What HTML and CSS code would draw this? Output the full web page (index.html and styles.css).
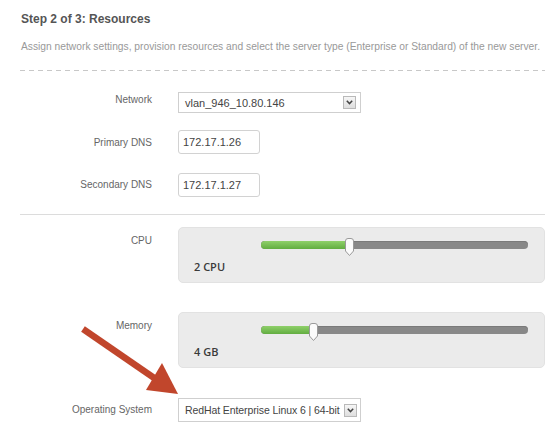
FILE: index.html
```html
<!DOCTYPE html>
<html>
<head>
<meta charset="utf-8">
<link rel="stylesheet" href="styles.css">
</head>
<body>
<div class="wizard">
  <h2 class="title">Step 2 of 3: Resources</h2>
  <p class="desc">Assign network settings, provision resources and select the server type (Enterprise or Standard) of the new server.</p>
  <div class="dashed"></div>

  <div class="row row-network">
    <div class="label">Network</div>
    <div class="select select-network">
      <span class="select-text">vlan_946_10.80.146</span>
      <span class="select-btn"><svg width="7" height="5" viewBox="0 0 7 5"><polyline points="0.8,0.8 3.5,3.6 6.2,0.8" fill="none" stroke="#444" stroke-width="1.5"/></svg></span>
    </div>
  </div>
  <div class="row row-dns1">
    <div class="label">Primary DNS</div>
    <div class="input">172.17.1.26</div>
  </div>
  <div class="row row-dns2">
    <div class="label">Secondary DNS</div>
    <div class="input">172.17.1.27</div>
  </div>

  <div class="solid"></div>

  <div class="row row-slider row-cpu">
    <div class="label label-top">CPU</div>
    <div class="panel">
      <div class="track">
        <div class="fill" style="width:87px"></div>
        <svg class="handle" style="left:83px" width="11" height="19" viewBox="0 0 11 19"><path d="M1.5 3 Q1.5 0.5 4 0.5 H7 Q9.5 0.5 9.5 3 V13 L5.5 17.5 L1.5 13 Z" fill="#fbfbfb" stroke="#9a9a9a" stroke-width="1"/></svg>
      </div>
      <div class="value">2 CPU</div>
    </div>
  </div>

  <div class="row row-slider row-mem">
    <div class="label label-top">Memory</div>
    <div class="panel">
      <div class="track">
        <div class="fill" style="width:50px"></div>
        <svg class="handle" style="left:47px" width="11" height="19" viewBox="0 0 11 19"><path d="M1.5 3 Q1.5 0.5 4 0.5 H7 Q9.5 0.5 9.5 3 V13 L5.5 17.5 L1.5 13 Z" fill="#fbfbfb" stroke="#9a9a9a" stroke-width="1"/></svg>
      </div>
      <div class="value">4 GB</div>
    </div>
  </div>

  <div class="row row-os">
    <div class="label">Operating System</div>
    <div class="select select-os">
      <span class="select-text">RedHat Enterprise Linux 6 | 64-bit</span>
      <span class="select-btn"><svg width="7" height="5" viewBox="0 0 7 5"><polyline points="0.8,0.8 3.5,3.6 6.2,0.8" fill="none" stroke="#444" stroke-width="1.5"/></svg></span>
    </div>
  </div>

  <svg class="pointer" width="200" height="110" viewBox="0 0 200 110">
    <line x1="83" y1="14" x2="160" y2="67" stroke="#c1462c" stroke-width="6.5"/>
    <polygon points="178,79 146,75 162,48" fill="#c1462c"/>
  </svg>
</div>
</body>
</html>
```

FILE: styles.css
```css
html, body {
  margin: 0;
  padding: 0;
  background: #ffffff;
}
body {
  font-family: "Liberation Sans", Arial, sans-serif;
  color: #666;
}
.wizard {
  position: relative;
  padding: 12px 5px 0 20px;
  width: 525px;
}
.title {
  margin: 0;
  font-size: 12px;
  line-height: 14px;
  font-weight: bold;
  color: #555;
  padding-left: 1px;
}
.desc {
  margin: 15px 0 0 0;
  font-size: 10.25px;
  line-height: 12px;
  color: #999;
  padding-left: 1px;
  white-space: nowrap;
}
.dashed {
  margin-top: 17px;
  height: 1px;
  background: repeating-linear-gradient(to right, #c8c8c8 0 5px, transparent 5px 9px);
}
.row {
  display: grid;
  grid-template-columns: 132px auto;
  column-gap: 26px;
  align-items: center;
  justify-items: start;
}
.label {
  justify-self: end;
  font-size: 10px;
  line-height: 12px;
  color: #666;
}
.row-network { margin-top: 21px; }
.row-network .label { margin-bottom: 5px; }
.row-dns1 { margin-top: 17px; }
.row-dns1 .label { margin-top: 2px; }
.row-dns2 { margin-top: 19px; }
.select {
  box-sizing: border-box;
  display: flex;
  align-items: center;
  justify-content: space-between;
  background: #fff;
  border: 1px solid #cfcfcf;
  padding: 0 4px 0 6px;
  font-size: 11px;
  color: #444;
}
.select-text {
  white-space: nowrap;
}
.select-network {
  width: 183px;
  height: 21px;
}
.select-btn {
  flex: none;
  box-sizing: border-box;
  width: 13px;
  height: 13px;
  border: 1px solid #b9b9b9;
  background: linear-gradient(#f6f6f6, #dedede);
  display: flex;
  align-items: center;
  justify-content: center;
}
.input {
  box-sizing: border-box;
  width: 82px;
  height: 24px;
  border: 1px solid #d2d2d2;
  border-radius: 3px;
  font-size: 11px;
  line-height: 22px;
  padding-left: 4px;
  color: #444;
}
.solid {
  margin-top: 17px;
  height: 1px;
  background: #dcdcdc;
}
.row-slider {
  align-items: start;
}
.row-cpu { margin-top: 12px; }
.row-mem { margin-top: 29px; }
.label-top { margin-top: 8px; }
.panel {
  box-sizing: border-box;
  width: 367px;
  height: 56px;
  background: #ebebeb;
  border: 1px solid #e2e2e2;
  border-radius: 5px;
  padding: 13px 0 0 15px;
}
.track {
  position: relative;
  margin-left: 67px;
  width: 267px;
  height: 8px;
  border-radius: 4px;
  background: #888;
  box-shadow: inset 0 1px 0 #7a7a7a;
}
.fill {
  height: 8px;
  border-radius: 4px 0 0 4px;
  background: linear-gradient(#8fd06a, #62ad41);
}
.handle {
  position: absolute;
  top: -3px;
}
.value {
  margin-top: 11px;
  font-family: "Open Sans", "Liberation Sans", sans-serif;
  font-weight: 600;
  font-size: 11px;
  line-height: 14px;
  color: #3a3a3a;
}
.row-os { margin-top: 30px; }
.select-os {
  min-width: 183px;
  height: 24px;
  padding: 0 3px 0 6px;
  gap: 3px;
  font-size: 10.5px;
}
.select-os .select-text {
  letter-spacing: -0.1px;
}
.pointer {
  position: absolute;
  left: 0;
  top: 315px;
}
```
